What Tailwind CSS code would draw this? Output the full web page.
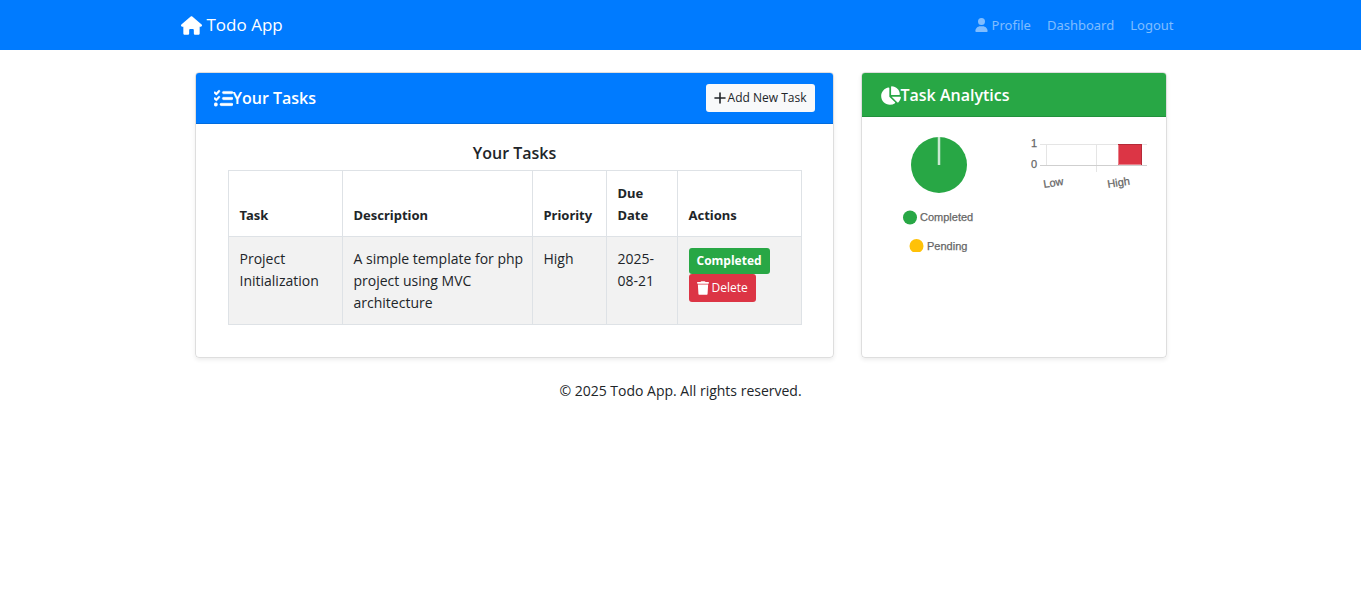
<!DOCTYPE html>
<html lang="en">
<head>
<meta charset="utf-8">
<meta name="viewport" content="width=device-width, initial-scale=1">
<title>Todo App</title>
<script src="https://cdn.jsdelivr.net/npm/@tailwindcss/browser@4"></script>
</head>
<body class="bg-white font-['Segoe_UI','Open_Sans',sans-serif] text-[14px] leading-[22px] text-[#212529]">
<nav class="bg-[#007bff]">
  <div class="mx-auto flex h-[50px] max-w-[1000px] items-center justify-between pr-[7px]">
    <a href="#" class="flex items-center gap-[5px] text-[17px] text-white">
      <svg class="h-[19px] w-[21px]" viewBox="0 0 576 512" fill="currentColor" aria-hidden="true"><path d="M575.800 255.500c0 18-15 32.100-32 32.100h-32l.7 160.200c0 2.700-.2 5.400-.5 8.100V472c0 22.100-17.900 40-40 40H392c-22.100 0-40-17.900-40-40v-88c0-17.700-14.300-32-32-32h-64c-17.700 0-32 14.300-32 32v88c0 22.100-17.900 40-40 40H104c-22.100 0-40-17.900-40-40V287.600H32c-18 0-32-14-32-32.100 0-9 3-17 10-24L266.400 8c7-7 15-8 22-8s15 2 21 7L564.800 231.500c8 7 12 15 11 24z"/></svg>
      Todo App</a>
    <div class="flex items-center gap-4 font-['Segoe_UI','Noto_Sans',sans-serif] text-[13px] text-white/50">
      <a href="#" class="flex items-center gap-1"><svg class="h-[14px] w-[13px]" viewBox="0 0 448 512" fill="currentColor" aria-hidden="true"><path d="M224 256a128 128 0 1 0 0-256 128 128 0 1 0 0 256zm-45.700 48C79.800 304 0 383.800 0 482.300 0 498.700 13.300 512 29.700 512h388.600c16.400 0 29.700-13.300 29.700-29.700C448 383.800 368.200 304 269.700 304z"/></svg>Profile</a>
      <a href="#">Dashboard</a>
      <a href="#">Logout</a>
    </div>
  </div>
</nav>
<main class="mx-auto mt-[22px] grid max-w-[972px] grid-cols-[639fr_306fr] gap-[27px]">
  <section class="overflow-hidden rounded-[4px] border border-black/13 shadow-[0_2px_4px_rgba(0,0,0,0.075)]">
    <header class="flex items-center justify-between border-b border-black/13 bg-[#007bff] px-[18px] py-[11px]">
      <h2 class="flex items-center text-[16px] font-semibold text-white"><svg class="h-[19px] w-[19px]" viewBox="0 0 512 512" fill="currentColor" stroke="currentColor" stroke-width="14" aria-hidden="true"><path d="M152.100 38.200c9.900 8.900 10.700 24 1.800 33.900l-72 80c-4.400 4.900-10.600 7.800-17.200 7.900s-12.900-2.400-17.600-7L7 113c-9.300-9.400-9.300-24.600 0-34s24.600-9.400 34 0l22.100 22.100 55.100-61.200c8.900-9.900 24-10.700 33.900-1.700zm0 160c9.900 8.900 10.700 24 1.800 33.900l-72 80c-4.400 4.900-10.600 7.800-17.200 7.900s-12.900-2.400-17.600-7L7 273c-9.400-9.400-9.400-24.600 0-33.900s24.600-9.400 33.900 0L63 261.200l55.100-61.200c8.900-9.900 24-10.700 33.900-1.800zM224 96c0-17.700 14.300-32 32-32h224c17.700 0 32 14.300 32 32s-14.300 32-32 32H256c-17.700 0-32-14.300-32-32zm0 160c0-17.700 14.300-32 32-32h224c17.700 0 32 14.300 32 32s-14.300 32-32 32H256c-17.700 0-32-14.300-32-32zm-64 160c0-17.700 14.300-32 32-32h288c17.700 0 32 14.300 32 32s-14.300 32-32 32H192c-17.700 0-32-14.300-32-32zM48 368a48 48 0 1 1 0 96 48 48 0 1 1 0-96z"/></svg>Your Tasks</h2>
      <button class="flex h-[28px] items-center gap-[2px] rounded-[3px] bg-[#f8f9fa] px-2 text-[12px] text-[#212529]"><svg class="h-[12px] w-[12px]" viewBox="0 0 12 12" stroke="currentColor" stroke-width="1.600" stroke-linecap="round" aria-hidden="true"><path d="M6 1v10M1 6h10"/></svg>Add New Task</button>
    </header>
    <div class="pt-[18px] pr-[31px] pb-8 pl-8">
      <h3 class="mb-[6px] text-center text-[16px] font-semibold">Your Tasks</h3>
      <table class="w-full table-fixed border-collapse text-left [&_td]:border [&_td]:border-[#dee2e6] [&_td]:pt-[11px] [&_td]:pr-[6px] [&_td]:pb-[10px] [&_td]:pl-[11px] [&_td]:align-top [&_th]:border [&_th]:border-[#dee2e6] [&_th]:pt-[11px] [&_th]:pr-[6px] [&_th]:pb-[10px] [&_th]:pl-[11px] [&_th]:align-bottom">
        <colgroup><col class="w-[114px]"><col class="w-[190px]"><col class="w-[74px]"><col class="w-[71px]"><col></colgroup>
        <thead class="font-['Segoe_UI','Noto_Sans',sans-serif] text-[13px]"><tr><th>Task</th><th>Description</th><th>Priority</th><th>Due<br>Date</th><th>Actions</th></tr></thead>
        <tbody><tr class="bg-[#f2f2f2]">
          <td>Project Initialization</td><td>A simple template for php project using MVC architecture</td><td>High</td><td>2025-08-21</td>
          <td><div class="flex flex-col items-start">
            <span class="flex h-[26px] items-center rounded-[3px] bg-[#28a745] px-2 text-[12px] font-bold text-white">Completed</span>
            <button class="flex h-[28px] items-center gap-[3px] rounded-[3px] bg-[#dc3545] px-2 text-[12px] text-white"><svg class="h-[14px] w-[12px]" viewBox="0 0 448 512" fill="currentColor" aria-hidden="true"><path d="M135 18 128 32H32a32 32 0 1 0 0 64h384a32 32 0 1 0 0-64h-96l-7-14A32 32 0 0 0 284 0H164a32 32 0 0 0-29 18zM416 128H32l21 339a48 48 0 0 0 48 45h246a48 48 0 0 0 48-45z"/></svg>Delete</button>
          </div></td>
        </tr></tbody>
      </table>
    </div>
  </section>
  <section class="overflow-hidden rounded-[4px] border border-black/13 shadow-[0_2px_4px_rgba(0,0,0,0.075)]">
    <header class="border-b border-black/13 bg-[#28a745] px-[18px] pt-[11px] pb-[10px]">
      <h2 class="flex items-center text-[16px] font-semibold text-white"><svg class="h-[19px] w-[21px]" viewBox="0 0 576 512" fill="currentColor" aria-hidden="true"><path d="M304 240V16.600c0-9 7-16.600 16-16.600 123.700 0 224 100.300 224 224 0 9-7.600 16-16.600 16zM32 272C32 150.700 122.100 50.300 239 34.300c9.200-1.300 17 6.100 17 15.400V288l156.500 156.500c6.700 6.700 6.200 17.700-1.500 23.100A239.500 239.500 0 0 1 272 512C139.500 512 32 404.600 32 272zm526.400 16c9.300 0 16.600 7.800 15.400 17-7.700 55.900-34.600 105.600-73.900 142.300-6 5.600-15.400 5.200-21.200-.7L320 288z"/></svg>Task Analytics</h2>
    </header>
    <div class="grid grid-cols-2 gap-8 p-[18px] font-['Liberation_Sans',Arial,sans-serif]">
      <svg class="w-full" viewBox="0 0 118 117" role="img" aria-label="Completed and pending tasks">
        <circle cx="59" cy="30" r="28" fill="#28a745"/><path d="M59 2v28" stroke="#fff" stroke-opacity=".75" stroke-width="2.500"/>
        <circle cx="30" cy="82.500" r="7" fill="#28a745"/><text x="40" y="86" font-size="11" fill="#666" stroke="#666" stroke-width=".25">Completed</text>
        <circle cx="36.500" cy="111" r="7" fill="#ffc107"/><text x="47" y="115" font-size="11" fill="#666" stroke="#666" stroke-width=".25">Pending</text>
      </svg>
      <svg class="w-full" viewBox="0 0 118 117" role="img" aria-label="Tasks by priority">
        <path d="M10 9.500h107M16.500 9v21M66.500 9v28" stroke="#e5e5e5" fill="none"/><path d="M10 30.500h107" stroke="#cfcfcf"/>
        <path d="M88 9h24v21H88z" fill="#dc3545"/><path d="M88 9.500h23.500V30" fill="none" stroke="#b52a38"/><path d="M88.500 10v19.500H111" fill="none" stroke="#e9808a"/>
        <g font-size="11" fill="#666" stroke="#666" stroke-width=".25"><text x="1" y="12">1</text><text x="1" y="33">0</text><text transform="translate(14 53) rotate(-9)">Low</text><text transform="translate(78 53) rotate(-9)">High</text></g>
      </svg>
    </div>
  </section>
</main>
<footer class="mt-[22px] text-center"><p>© 2025 Todo App. All rights reserved.</p></footer>
</body>
</html>
